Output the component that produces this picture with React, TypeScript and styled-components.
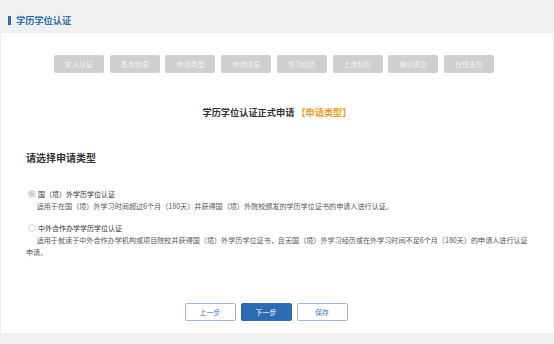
import React from "react";
import styled, { createGlobalStyle } from "styled-components";

const Global = createGlobalStyle`
  html, body { margin: 0; padding: 0; background: #f0f0f0; }
  body { font-family: "Noto Sans CJK SC", "Noto Sans", sans-serif; }
  * { box-sizing: border-box; }
`;

const Page = styled.div`
  width: 554px;
  height: 344px;
  background: #f0f0f0;
  overflow: hidden;
`;

const Header = styled.header`
  height: 33px;
  padding: 7px 0 0 8px;
  display: flex;
  align-items: center;
`;

const HeaderBar = styled.span`
  width: 2.5px;
  height: 9px;
  background: #2a6cb5;
  margin-right: 5.5px;
`;

const HeaderTitle = styled.h1`
  margin: 0;
  font-size: 9.2px;
  line-height: 12px;
  font-weight: 700;
  color: #2a6cb5;
`;

const Panel = styled.main`
  background: #fff;
  margin: 0 1px;
  height: 300px;
  display: flex;
  flex-direction: column;
`;

const Steps = styled.nav`
  margin-top: 22px;
  padding-right: 6px;
  display: flex;
  justify-content: center;
  gap: 5.7px;
`;

const Step = styled.div`
  width: 50px;
  height: 18px;
  border-radius: 2px;
  background: #cfcfcf;
  color: #f2f2f2;
  font-size: 7px;
  display: flex;
  align-items: center;
  justify-content: center;
`;

const FormTitle = styled.h2`
  margin: 31.7px 0 0;
  font-size: 9.2px;
  line-height: 14px;
  font-weight: 700;
  color: #333;
  text-align: center;
`;

const Highlight = styled.span`
  color: #f29b1d;
  margin-left: 2px;
`;

const Section = styled.section`
  padding: 0 22px 0 25px;
`;

const SectionTitle = styled.h3`
  margin: 32.3px 0 0;
  font-size: 10px;
  line-height: 14px;
  font-weight: 700;
  color: #333;
`;

const Option = styled.div<{ $gap: number }>`
  margin-top: ${(p) => p.$gap}px;
`;

const OptionHead = styled.label`
  display: flex;
  align-items: center;
  gap: 2px;
  height: 12px;
  font-size: 7px;
  line-height: 12px;
  color: #333;
`;

const Radio = styled.span<{ $checked?: boolean }>`
  width: 8.5px;
  height: 8.5px;
  margin-left: 1.5px;
  border-radius: 50%;
  border: 1px solid ${(p) => (p.$checked ? "#cfcfcf" : "#d6d6d6")};
  background: ${(p) => (p.$checked ? "#ebebeb" : "#fff")};
  display: flex;
  align-items: center;
  justify-content: center;
  &::after {
    content: "";
    width: 3.5px;
    height: 3.5px;
    border-radius: 50%;
    background: ${(p) => (p.$checked ? "#cdcdcd" : "transparent")};
  }
`;

const Desc = styled.p`
  margin: 0;
  font-size: 7.1px;
  line-height: 12px;
  text-indent: 10.7px;
  color: #555;
`;

const Actions = styled.div`
  margin-top: 45px;
  padding-right: 22px;
  display: flex;
  justify-content: center;
  gap: 5px;
`;

const Button = styled.button<{ $primary?: boolean }>`
  width: 51px;
  height: 18px;
  padding: 0;
  border-radius: 2px;
  border: 1px solid ${(p) => (p.$primary ? "#2b6cb3" : "#9fbbdb")};
  background: ${(p) => (p.$primary ? "#2b6cb3" : "#fff")};
  color: ${(p) => (p.$primary ? "#fff" : "#3b78c0")};
  font-family: inherit;
  font-size: 7px;
  cursor: pointer;
`;

const steps = ["实人认证", "基本信息", "申请类型", "申请信息", "学习经历", "上传材料", "确认提交", "在线支付"];

export default function App() {
  return (
    <Page>
      <Global />
      <Header>
        <HeaderBar />
        <HeaderTitle>学历学位认证</HeaderTitle>
      </Header>
      <Panel>
        <Steps>
          {steps.map((s) => (
            <Step key={s}>{s}</Step>
          ))}
        </Steps>
        <FormTitle>
          学历学位认证正式申请<Highlight>【申请类型】</Highlight>
        </FormTitle>
        <Section>
          <SectionTitle>请选择申请类型</SectionTitle>
          <Option $gap={23}>
            <OptionHead>
              <Radio $checked />
              国（境）外学历学位认证
            </OptionHead>
            <Desc>
              适用于在国（境）外学习时间超过6个月（180天）并获得国（境）外院校颁发的学历学位证书的申请人进行认证。
            </Desc>
          </Option>
          <Option $gap={10}>
            <OptionHead>
              <Radio />
              中外合作办学学历学位认证
            </OptionHead>
            <Desc>
              适用于就读于中外合作办学机构或项目院校并获得国（境）外学历学位证书，且无国（境）外学习经历或在外学习时间不足6个月（180天）的申请人进行认证申请。
            </Desc>
          </Option>
        </Section>
        <Actions>
          <Button>上一步</Button>
          <Button $primary>下一步</Button>
          <Button>保存</Button>
        </Actions>
      </Panel>
    </Page>
  );
}
